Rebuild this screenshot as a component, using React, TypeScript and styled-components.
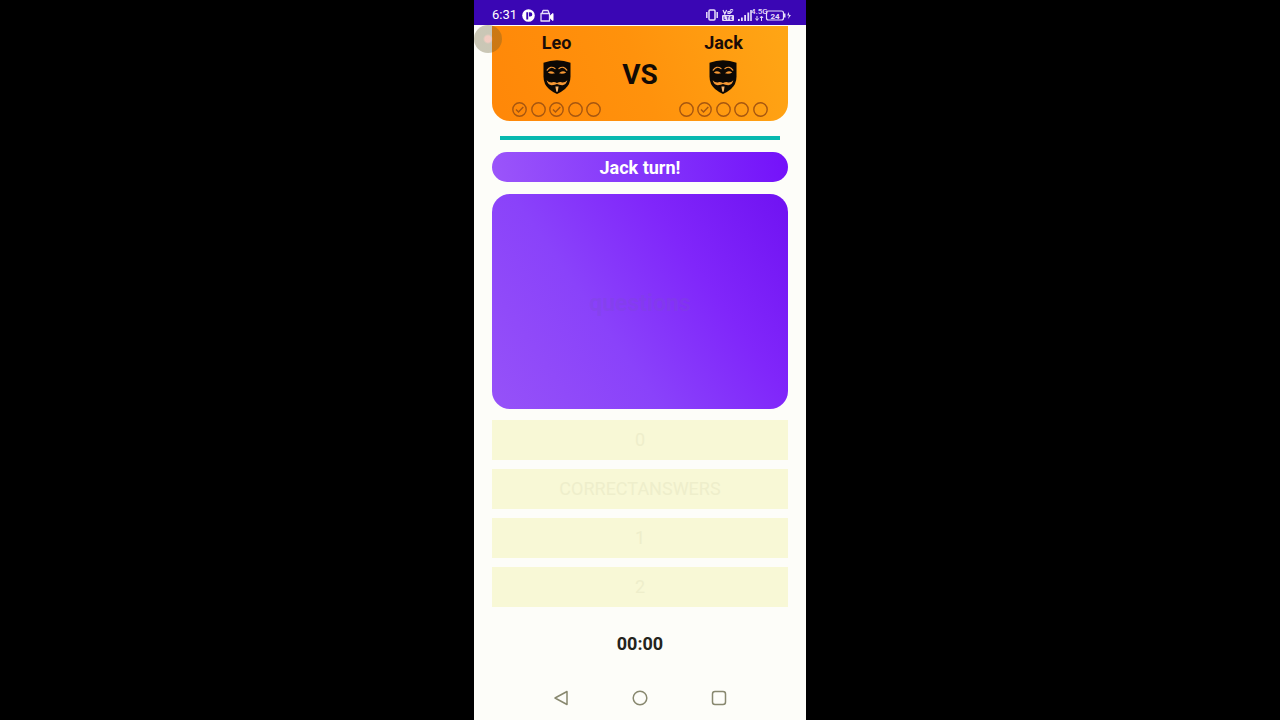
import React from "react";
import styled, { createGlobalStyle } from "styled-components";

const GlobalStyle = createGlobalStyle`
  * { box-sizing: border-box; }
  body {
    margin: 0;
    background: #000;
    font-family: Roboto, "Liberation Sans", sans-serif;
  }
`;

const Phone = styled.div`
  position: relative;
  display: flex;
  flex-direction: column;
  width: 100%;
  max-width: 332px;
  min-height: 100vh;
  margin: 0 auto;
  background: #fdfdf9;
`;

const StatusBar = styled.header`
  display: flex;
  justify-content: space-between;
  align-items: center;
  height: 25px;
  padding: 5px 14px 0 18px;
  background: #3a06b4;
  color: #fff;
`;

const StatusGroup = styled.div<{ $gap: number }>`
  display: flex;
  align-items: center;
  gap: ${(p) => p.$gap}px;
`;

const Clock = styled.span`
  font-size: 13px;
  line-height: 16px;
`;

const Screen = styled.main`
  display: flex;
  flex-direction: column;
  flex: 1;
  padding: 1px 18px 0;
`;

const Scoreboard = styled.section`
  display: flex;
  justify-content: space-between;
  height: 95px;
  padding: 6px 20px 4px;
  border-radius: 0 0 18px 18px;
  background: linear-gradient(70deg, #ff8708 0%, #ff920c 50%, #ffa615 100%);
`;

const PlayerColumn = styled.div`
  display: flex;
  flex-direction: column;
  align-items: center;
  width: 89px;
`;

const PlayerName = styled.h2`
  margin: 0 0 6px;
  font-size: 18px;
  line-height: 22px;
  font-weight: 700;
  color: #1a0c08;
`;

const Rounds = styled.div`
  display: flex;
  justify-content: space-between;
  width: 100%;
  margin-top: 8px;
`;

const Versus = styled.span`
  align-self: center;
  font-size: 28px;
  line-height: 32px;
  font-weight: 700;
  color: #120a05;
`;

const TimeBar = styled.div`
  height: 4px;
  margin: 15px 8px 12px;
  background: #08b8ae;
`;

const TurnBanner = styled.div`
  height: 30px;
  border-radius: 15px;
  background: linear-gradient(80deg, #9b55fa 0%, #8436fb 50%, #7411fa 100%);
  color: #fff;
  font-size: 18px;
  line-height: 32px;
  font-weight: 700;
  text-align: center;
`;

const QuestionCard = styled.section`
  display: flex;
  align-items: center;
  justify-content: center;
  height: 215px;
  margin: 12px 0 11px;
  padding-top: 4px;
  border-radius: 18px;
  background: linear-gradient(55deg, #9652f8 0%, #8a42fa 38%, #8026fa 68%, #7012f2 100%);
`;

const QuestionText = styled.p`
  margin: 0;
  font-size: 23px;
  line-height: 26px;
  font-weight: 700;
  color: rgba(125, 75, 205, 0.3);
`;

const AnswerList = styled.div`
  display: flex;
  flex-direction: column;
  gap: 9px;
`;

const AnswerButton = styled.button`
  height: 40px;
  padding: 0;
  border: 0;
  background: #f8f8d6;
  color: #eeeecb;
  font: 400 18px/20px Roboto, "Liberation Sans", sans-serif;
`;

const Timer = styled.time`
  margin-top: 26px;
  font-size: 18px;
  line-height: 22px;
  font-weight: 700;
  text-align: center;
  color: #24241c;
`;

const NavBar = styled.nav`
  display: flex;
  justify-content: center;
  gap: 59px;
  height: 32px;
`;

const NavButton = styled.button`
  display: flex;
  justify-content: center;
  width: 20px;
  height: 20px;
  padding: 0;
  border: 0;
  background: none;
`;

const TouchPointer = styled.span`
  position: absolute;
  top: 25px;
  left: 0;
  width: 28px;
  height: 28px;
  border-radius: 50%;
  background: radial-gradient(circle, rgba(225, 130, 110, 0.4) 0 3px, rgba(95, 85, 40, 0.32) 5px);
`;

const Mask = () => (
  <svg width="28" height="34" viewBox="0 0 28 34" aria-hidden="true">
    <path d="M.5 2.800Q7 .3 14 .3t13.500 2.500v13.800q0 7.800-5.500 12.400Q18 32.300 14 34 10 32.300 6 29 .5 24.400.5 16.600z" fill="#0d0804" />
    <g fill="none" stroke="#f79834" strokeLinecap="round" strokeLinejoin="round">
      <path d="M4.200 10.200Q7.500 5.300 12 8.600M23.800 10.200Q20.500 5.300 16 8.600" strokeWidth="1.200" />
    </g>
    <path d="M4.800 12.400Q8.500 9.600 12 13.200 8 14.400 4.800 12.400zM23.200 12.400Q19.500 9.600 16 13.200 20 14.400 23.200 12.400z" fill="#f79834" />
    <path d="M3.600 20.300q2.300 2.300 4.900 2.200Q11 21.400 14 23q3-1.600 5.500-.5 2.600.1 4.900-2.200-1.500 5-5.200 4.900-3.300-.1-5.200-1.200-1.900 1.100-5.200 1.200-3.700.1-5.200-4.900z" fill="#f79834" />
    <path d="M12.400 26.500h3.200l-.9 5.200h-1.400z" fill="#f9b46b" />
  </svg>
);

const Round = ({ won }: { won: boolean }) => (
  <svg width="15" height="15" viewBox="0 0 15 15" fill="none" stroke="#a65610" strokeWidth="1.400" aria-hidden="true">
    <circle cx="7.500" cy="7.500" r="6.700" />
    {won && <path d="M4 7.600l2.500 2.500L11.300 5" />}
  </svg>
);

const StatusIcons = () => (
  <StatusGroup $gap={4}>
    <svg width="12" height="12" viewBox="0 0 12 12" fill="none" stroke="#e6defa" strokeWidth="1.500" aria-hidden="true">
      <rect x="3" y="1" width="6" height="10" rx="1" />
      <path d="M.8 3v6M11.200 3v6" />
    </svg>
    <svg width="12" height="14" viewBox="0 0 12 14" aria-hidden="true">
      <path d="M1 2l1.800 4L4.600 2M6 3.500h2v2H6zM8 2.500q2-2 3 0M9 5q0-1.500 1.500-1.500" fill="none" stroke="#e6defa" strokeWidth="1.200" />
      <rect y="7" width="12" height="6" rx="1" fill="#e6defa" />
      <path d="M2 8.500v3h1.700M4.500 8.700h2.400M5.700 8.700v3M10.200 8.700H8.300v2.800h1.900M8.300 10h1.600" fill="none" stroke="#3a06b4" strokeWidth=".8" />
    </svg>
    <svg width="54" height="16" viewBox="0 0 54 16" aria-hidden="true">
      <g fill="#e6defa">
        <path d="M0 12h1.800v2H0zM3 10.500h1.800V14H3zM6.200 8H8v6H6.200zM9.400 5.500h1.800V14H9.400zM12.200 3h1.600v11h-1.600z" />
        <text x="13" y="7" fontSize="8" fontFamily="Roboto" fontWeight="500">4.5G</text>
        <path d="M19 9v4M17.500 11.500l1.500 2 1.500-2M23.500 14v-4M22 11l1.500-2 1.500 2" fill="none" stroke="#e6defa" />
        <rect x="28.500" y="4" width="17" height="9" rx="2" fill="none" stroke="#e6defa" strokeWidth="1.200" />
        <path d="M46 6.500h1.500v4H46zM50.500 5l-1.200 3.500H51L50 12l3-4h-1.700z" />
        <text x="37" y="11.500" fontSize="8" fontFamily="Roboto" fontWeight="700" textAnchor="middle">24</text>
      </g>
    </svg>
  </StatusGroup>
);

const players = [
  { name: "Leo", rounds: [true, false, true, false, false] },
  { name: "Jack", rounds: [false, true, false, false, false] },
];

const answers = ["0", "CORRECTANSWERS", "1", "2"];

const Player = ({ name, rounds }: (typeof players)[number]) => (
  <PlayerColumn>
    <PlayerName>{name}</PlayerName>
    <Mask />
    <Rounds>
      {rounds.map((won, i) => (
        <Round key={i} won={won} />
      ))}
    </Rounds>
  </PlayerColumn>
);

export default function App() {
  return (
    <>
      <GlobalStyle />
      <Phone>
        <StatusBar>
          <StatusGroup $gap={5}>
            <Clock>6:31</Clock>
            <svg width="13" height="13" viewBox="0 0 13 13" aria-hidden="true">
              <circle cx="6.500" cy="6.500" r="6.300" fill="#fff" />
              <path d="M4.300 10.500V3.300h1.900v7.200zM7 3.300h1.200a2 2 0 0 1 0 4.200H7z" fill="#3a06b4" />
            </svg>
            <svg width="14" height="13" viewBox="0 0 14 13" aria-hidden="true">
              <path d="M1 4.500h8.500V12H1zM2 4.500l1-3h5l1.200 3" fill="none" stroke="#e6defa" strokeWidth="1.300" strokeLinejoin="round" />
              <path d="M10.500 6.500L13 4.500v7l-2.500-2z" fill="#fff" stroke="#fff" />
            </svg>
          </StatusGroup>
          <StatusIcons />
        </StatusBar>
        <Screen>
          <Scoreboard>
            <Player {...players[0]} />
            <Versus>VS</Versus>
            <Player {...players[1]} />
          </Scoreboard>
          <TimeBar role="progressbar" aria-label="Time left" />
          <TurnBanner>Jack turn!</TurnBanner>
          <QuestionCard>
            <QuestionText>questions</QuestionText>
          </QuestionCard>
          <AnswerList>
            {answers.map((answer) => (
              <AnswerButton key={answer} type="button">{answer}</AnswerButton>
            ))}
          </AnswerList>
          <Timer>00:00</Timer>
        </Screen>
        <NavBar>
          <NavButton type="button" aria-label="Back">
            <svg width="20" height="20" viewBox="0 0 20 20" fill="none" stroke="#88886f" strokeWidth="1.500" strokeLinejoin="round">
              <path d="M16 3.500v13L4 10z" />
            </svg>
          </NavButton>
          <NavButton type="button" aria-label="Home">
            <svg width="20" height="20" viewBox="0 0 20 20" fill="none" stroke="#88886f" strokeWidth="1.500">
              <circle cx="10" cy="10" r="6.800" />
            </svg>
          </NavButton>
          <NavButton type="button" aria-label="Recent apps">
            <svg width="20" height="20" viewBox="0 0 20 20" fill="none" stroke="#88886f" strokeWidth="1.500">
              <rect x="3.500" y="3.500" width="13" height="13" rx="2.500" />
            </svg>
          </NavButton>
        </NavBar>
        <TouchPointer />
      </Phone>
    </>
  );
}
